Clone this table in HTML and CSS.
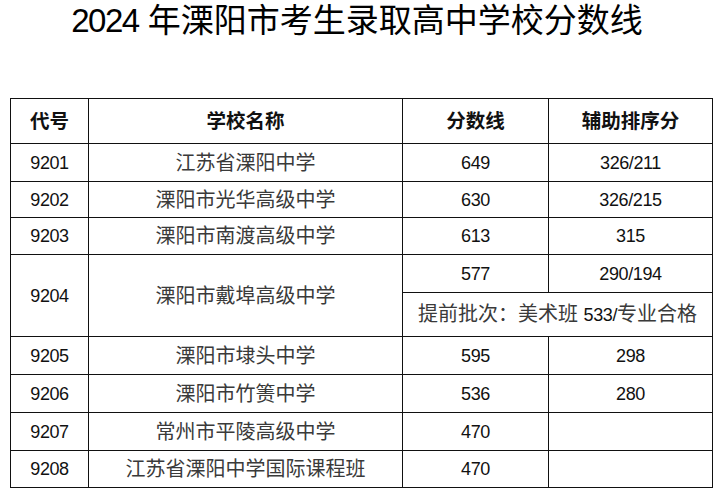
FILE: index.html
```html
<!DOCTYPE html>
<html lang="zh-CN">
<head>
<meta charset="utf-8">
<title>2024 年溧阳市考生录取高中学校分数线</title>
<link rel="stylesheet" href="styles.css">
</head>
<body>
<h1 class="title"><span class="yr">2024</span> 年溧阳市考生录取高中学校分数线</h1>
<table class="scores">
  <colgroup>
    <col class="c-code">
    <col class="c-name">
    <col class="c-score">
    <col class="c-aux">
  </colgroup>
  <thead>
    <tr class="h45"><th>代号</th><th>学校名称</th><th>分数线</th><th>辅助排序分</th></tr>
  </thead>
  <tbody>
    <tr class="h38"><td class="num">9201</td><td>江苏省溧阳中学</td><td class="num">649</td><td class="num">326/211</td></tr>
    <tr class="h36"><td class="num">9202</td><td>溧阳市光华高级中学</td><td class="num">630</td><td class="num">326/215</td></tr>
    <tr class="h37"><td class="num">9203</td><td>溧阳市南渡高级中学</td><td class="num">613</td><td class="num">315</td></tr>
    <tr class="h38"><td class="num" rowspan="2">9204</td><td rowspan="2">溧阳市戴埠高级中学</td><td class="num">577</td><td class="num">290/194</td></tr>
    <tr class="h44"><td colspan="2">提前批次：美术班 <span class="num">533/</span>专业合格</td></tr>
    <tr class="h38"><td class="num">9205</td><td>溧阳市埭头中学</td><td class="num">595</td><td class="num">298</td></tr>
    <tr class="h38"><td class="num">9206</td><td>溧阳市竹箦中学</td><td class="num">536</td><td class="num">280</td></tr>
    <tr class="h38"><td class="num">9207</td><td>常州市平陵高级中学</td><td class="num">470</td><td></td></tr>
    <tr class="h37"><td class="num">9208</td><td>江苏省溧阳中学国际课程班</td><td class="num">470</td><td></td></tr>
  </tbody>
</table>
</body>
</html>
```

FILE: styles.css
```css
html, body {
  margin: 0;
  padding: 0;
  background: #ffffff;
}

body {
  font-family: "Liberation Sans", "Noto Sans CJK SC", sans-serif;
  color: #222;
}

.title {
  margin: 0;
  height: 42px;
  line-height: 42px;
  font-size: 33px;
  font-weight: normal;
  color: #000;
  text-align: center;
  padding-right: 6px;
}

.title .yr {
  letter-spacing: -1.5px;
}

.scores {
  margin: 56px 0 0 10px;
  border-collapse: collapse;
  table-layout: fixed;
  width: 702px;
}

.c-code { width: 78px; }
.c-name { width: 314px; }
.c-score { width: 146px; }
.c-aux { width: 164px; }

.scores th,
.scores td {
  border: 1px solid #111;
  padding: 0;
  text-align: center;
  vertical-align: middle;
  font-size: 20px;
  line-height: 24px;
  white-space: nowrap;
}

.scores th {
  font-weight: bold;
  font-size: 19.5px;
  color: #111;
}

.scores td {
  color: #3a3a3a;
}

.scores .num {
  font-size: 18px;
  letter-spacing: -0.4px;
  color: #111;
}

.h45 { height: 45px; }
.h44 { height: 44px; }
.h38 { height: 38px; }
.h37 { height: 37px; }
.h36 { height: 36px; }
```
